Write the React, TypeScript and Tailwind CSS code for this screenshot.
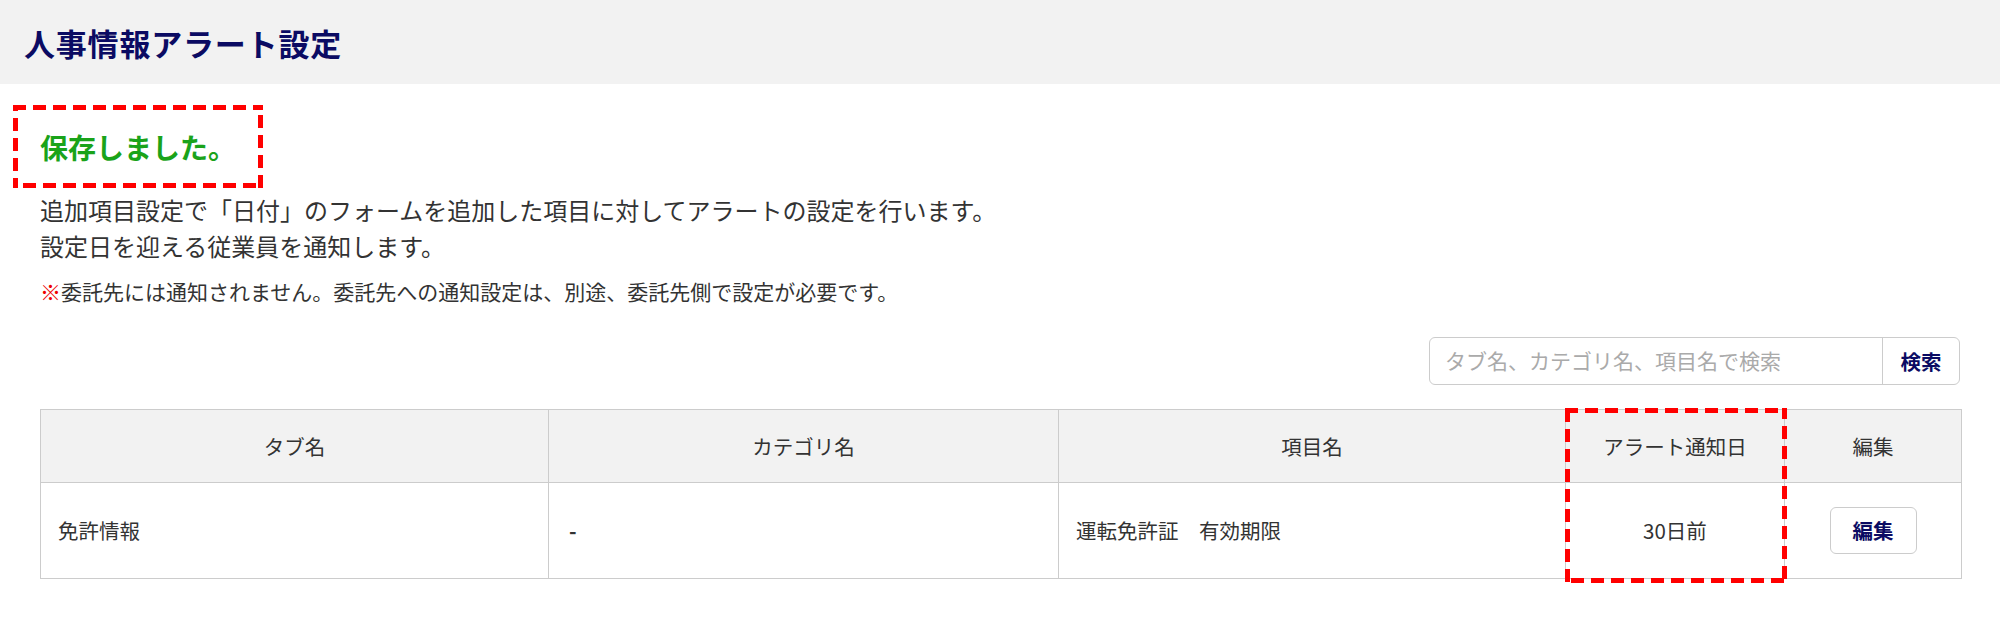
import React from "react";

function DashedOverlay({ className }: { className: string }) {
  return (
    <svg className={className} preserveAspectRatio="none" style={{ overflow: "hidden" }}>
      <rect x="0" y="0" width="100%" height="100%" fill="none" stroke="#ff0000" strokeWidth="10" strokeDasharray="13 7" />
    </svg>
  );
}

export default function App() {
  return (
    <div className="w-[2000px] min-h-[631px] bg-white font-[Noto_Sans_CJK_JP,sans-serif] text-[#333333]">
      <div className="h-[84px] bg-[#f2f2f2] flex items-center pl-[24px]">
        <h1 className="text-[31px] leading-none font-bold text-[#0b0b63] tracking-[0.8px]">人事情報アラート設定</h1>
      </div>

      <div className="relative mt-[21px] ml-[13px] w-[250px] h-[83px] flex items-center pl-[27px]">
        <DashedOverlay className="absolute inset-0 w-full h-full" />
        <span className="text-[28px] leading-none font-bold text-[#1aa31a]">保存しました。</span>
      </div>

      <div className="px-[40px]">
        <div className="mt-[4px] text-[24px] leading-[36px]">
          <p>追加項目設定で「日付」のフォームを追加した項目に対してアラートの設定を行います。</p>
          <p>設定日を迎える従業員を通知します。</p>
        </div>
        <p className="mt-[12px] text-[21px] leading-[30px]">
          <span className="text-[#ee0000]">※</span>委託先には通知されません。委託先への通知設定は、別途、委託先側で設定が必要です。
        </p>

        <div className="mt-[31px] flex justify-end">
          <div className="flex w-[531px] h-[48px] border border-[#cccccc] rounded-[6px] overflow-hidden">
            <div className="flex-1 flex items-center pl-[15px] text-[21px] text-[#aaaaaa]">タブ名、カテゴリ名、項目名で検索</div>
            <div className="w-[77px] border-l border-[#cccccc] flex items-center justify-center text-[20.5px] font-bold text-[#0b0b63]">検索</div>
          </div>
        </div>

        <div className="relative mt-[24px]">
          <table className="w-[1921px] table-fixed border-collapse text-[20.5px]">
            <colgroup>
              <col className="w-[508px]" />
              <col className="w-[510px]" />
              <col className="w-[507px]" />
              <col className="w-[219px]" />
              <col className="w-[177px]" />
            </colgroup>
            <thead>
              <tr className="h-[73px] bg-[#f2f2f2]">
                <th className="border border-[#cccccc] font-normal text-center">タブ名</th>
                <th className="border border-[#cccccc] font-normal text-center">カテゴリ名</th>
                <th className="border border-[#cccccc] font-normal text-center">項目名</th>
                <th className="border border-[#cccccc] font-normal text-center">アラート通知日</th>
                <th className="border border-[#cccccc] font-normal text-center">編集</th>
              </tr>
            </thead>
            <tbody>
              <tr className="h-[96px]">
                <td className="border border-[#cccccc] pl-[17px]">免許情報</td>
                <td className="border border-[#cccccc] pl-[20px] font-bold">-</td>
                <td className="border border-[#cccccc] pl-[17px]">運転免許証　有効期限</td>
                <td className="border border-[#cccccc] text-center">30日前</td>
                <td className="border border-[#cccccc] text-center">
                  <button className="w-[87px] h-[47px] border border-[#cccccc] rounded-[6px] bg-white font-bold text-[#0b0b63] text-[20.5px]">編集</button>
                </td>
              </tr>
            </tbody>
          </table>
          <DashedOverlay className="absolute left-[1525px] top-[-1px] w-[222px] h-[175px]" />
        </div>
      </div>
    </div>
  );
}
